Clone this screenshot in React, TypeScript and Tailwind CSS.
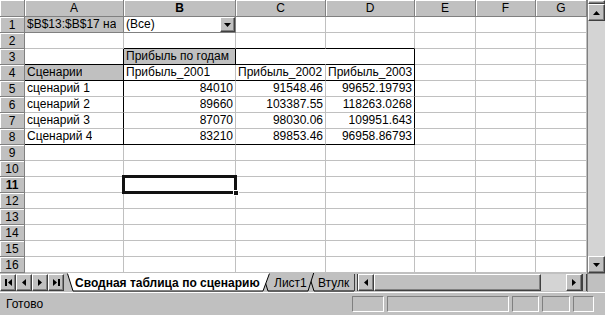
import React from "react";

type B = "g" | "k" | "h" | "n";
const RC: Record<B, string> = {
  g: "border-r-[#c0c0c0]",
  k: "border-r-black",
  h: "border-r-[#808080]",
  n: "border-r-white",
};
const BC: Record<B, string> = {
  g: "border-b-[#c0c0c0]",
  k: "border-b-black",
  h: "border-b-[#808080]",
  n: "border-b-white",
};

type CellDef = {
  t?: string;
  r?: B;
  b?: B;
  gray?: boolean;
  right?: boolean;
  sel?: boolean;
  dd?: boolean;
};

const raised =
  "border border-t-white border-l-white border-r-[#404040] border-b-[#404040] shadow-[inset_-1px_-1px_0_#808080] bg-[#c0c0c0]";

function Tri({ dir }: { dir: "up" | "down" | "left" | "right" }) {
  const pts: Record<string, string> = {
    up: "0,4 7,4 3.5,0",
    down: "0,0 7,0 3.5,4",
    left: "4,0 4,7 0,3.5",
    right: "0,0 0,7 4,3.5",
  };
  const wh = dir === "up" || dir === "down" ? { w: 7, h: 4 } : { w: 4, h: 7 };
  return (
    <svg width={wh.w} height={wh.h} viewBox={`0 0 ${wh.w} ${wh.h}`}>
      <polygon points={pts[dir]} fill="#000" />
    </svg>
  );
}

function Cell({ c }: { c: CellDef }) {
  const r = c.r ?? "g";
  const b = c.b ?? "g";
  return (
    <div
      className={`relative box-border border-r border-b ${RC[r]} ${BC[b]} ${
        c.gray ? "bg-[#c0c0c0]" : "bg-white"
      } flex items-center ${c.right ? "justify-end pr-[2px]" : "pl-[2px]"} ${
        c.sel ? "z-10" : ""
      } whitespace-nowrap text-[12px] leading-[15px] text-black`}
    >
      <span className="overflow-hidden leading-[15px]">{c.t ?? ""}</span>
      {c.dd && (
        <div className={`absolute right-0 top-0 bottom-0 w-[15px] flex items-center justify-center ${raised}`}>
          <Tri dir="down" />
        </div>
      )}
      {c.sel && (
        <>
          <div className="absolute left-[-2px] top-[-2px] right-[-2px] bottom-[-2px] border-[3px] border-[#111] pointer-events-none" />
          <div className="absolute right-[-4px] bottom-[-4px] w-[6px] h-[6px] bg-[#111] border border-white" />
        </>
      )}
    </div>
  );
}

const letters = ["A", "B", "C", "D", "E", "F", "G"];

function buildRows(): CellDef[][] {
  const rows: CellDef[][] = [];
  for (let i = 1; i <= 16; i++) {
    const row: CellDef[] = letters.map(() => ({}));
    rows.push(row);
  }
  rows[0][0] = { t: "$B$13:$B$17 на", gray: true, r: "h", b: "h" };
  rows[0][1] = { t: "(Все)", r: "h", b: "h", dd: true };
  rows[1][1] = { b: "k" };
  rows[1][2] = { b: "k" };
  rows[1][3] = { b: "k" };
  rows[2][0] = { r: "k", b: "k" };
  rows[2][1] = { t: "Прибыль по годам", gray: true, r: "k", b: "k" };
  rows[2][2] = { r: "n", b: "k" };
  rows[2][3] = { r: "k", b: "k" };
  rows[3][0] = { t: "Сценарии", gray: true, r: "k", b: "k" };
  rows[3][1] = { t: "Прибыль_2001", r: "g", b: "k" };
  rows[3][2] = { t: "Прибыль_2002", r: "g", b: "k" };
  rows[3][3] = { t: "Прибыль_2003", r: "k", b: "k" };
  const data = [
    ["сценарий 1", "84010", "91548.46", "99652.19793"],
    ["сценарий 2", "89660", "103387.55", "118263.0268"],
    ["сценарий 3", "87070", "98030.06", "109951.643"],
    ["Сценарий 4", "83210", "89853.46", "96958.86793"],
  ];
  data.forEach((d, i) => {
    const last = i === 3;
    const bb: B = last ? "k" : "g";
    rows[4 + i][0] = { t: d[0], r: "k", b: bb };
    rows[4 + i][1] = { t: d[1], right: true, r: "g", b: bb };
    rows[4 + i][2] = { t: d[2], right: true, r: "g", b: bb };
    rows[4 + i][3] = { t: d[3], right: true, r: "k", b: bb };
  });
  rows[10][1] = { sel: true };
  return rows;
}

function ColHeader({ l }: { l: string }) {
  return (
    <div
      className={`box-border bg-[#c0c0c0] border-r border-b border-r-[#808080] border-b-[#808080] shadow-[inset_1px_1px_0_#fff] flex items-center justify-center text-[12px] leading-none text-black ${
        l === "B" ? "font-bold" : ""
      }`}
    >
      {l}
    </div>
  );
}

function RowHeader({ n }: { n: number }) {
  return (
    <div
      className={`box-border bg-[#c0c0c0] border-r border-b border-r-[#808080] border-b-[#808080] shadow-[inset_1px_1px_0_#fff] flex items-center justify-center text-[12px] leading-none text-black ${
        n === 11 ? "font-bold" : ""
      }`}
    >
      {n}
    </div>
  );
}

function Sheet() {
  const rows = buildRows();
  return (
    <div className="grid grid-cols-[25px_99px_112px_90px_89px_61px_60px_51px] grid-rows-[17px_repeat(16,16px)] w-[587px] h-[273px]">
      <div className="box-border bg-[#c0c0c0] border-r border-b border-r-[#808080] border-b-[#808080] shadow-[inset_1px_1px_0_#fff]" />
      {letters.map((l) => (
        <ColHeader key={l} l={l} />
      ))}
      {rows.map((row, i) => (
        <React.Fragment key={i}>
          <RowHeader n={i + 1} />
          {row.map((c, j) => (
            <Cell key={j} c={c} />
          ))}
        </React.Fragment>
      ))}
    </div>
  );
}

function VScroll() {
  return (
    <div className="w-[18px] h-[273px] flex flex-col bg-[#c0c0c0] box-border border-l border-l-[#808080]">
      <div className={`h-[4px] box-border ${raised}`} />
      <div className={`h-[17px] box-border flex items-center justify-center ${raised}`}>
        <Tri dir="up" />
      </div>
      <div className="flex-1 bg-[#d4d4d4]" />
      <div className={`h-[17px] box-border flex items-center justify-center ${raised}`}>
        <Tri dir="down" />
      </div>
    </div>
  );
}

function NavBtn({ kind }: { kind: "first" | "prev" | "next" | "last" }) {
  return (
    <div className={`w-[16px] h-[17px] box-border flex items-center justify-center gap-[1px] ${raised}`}>
      {kind === "first" && <div className="w-[2px] h-[7px] bg-black" />}
      {(kind === "first" || kind === "prev") && <Tri dir="left" />}
      {(kind === "next" || kind === "last") && <Tri dir="right" />}
      {kind === "last" && <div className="w-[2px] h-[7px] bg-black" />}
    </div>
  );
}

function Tabs() {
  return (
    <div className="relative w-[288px] h-[19px] overflow-hidden">
      <svg className="absolute inset-0" width="288" height="19" viewBox="0 0 288 19">
        <polygon points="242,-1 248,18 300,18 306,-1" fill="#c0c0c0" stroke="#000" strokeWidth="1" />
        <polygon points="196,-1 202,18 242,18 248,-1" fill="#c0c0c0" stroke="#000" strokeWidth="1" />
        <polygon points="1,-1 7,18 197,18 204,-1" fill="#fff" stroke="#000" strokeWidth="1" />
        <line x1="1" y1="0" x2="204" y2="0" stroke="#fff" strokeWidth="1" />
      </svg>
      <span className="absolute left-[9px] top-[3px] text-[12px] leading-[14px] font-bold text-black whitespace-nowrap">
        Сводная таблица по сценарию
      </span>
      <span className="absolute left-[208px] top-[3px] text-[12px] leading-[14px] text-black whitespace-nowrap">
        Лист1
      </span>
      <span className="absolute left-[252px] top-[3px] text-[12px] leading-[14px] text-black whitespace-nowrap">
        Втулк
      </span>
    </div>
  );
}

function HScroll() {
  return (
    <div className="flex items-start h-[19px] pt-[1px]">
      <div className="w-[4px] h-[17px] box-border border-l border-r border-l-[#404040] border-r-[#404040] bg-[#c0c0c0]" />
      <div className={`w-[16px] h-[17px] box-border flex items-center justify-center ${raised}`}>
        <Tri dir="left" />
      </div>
      <div className={`w-[167px] h-[17px] box-border ${raised}`} />
      <div className="w-[25px] h-[17px] bg-[#d4d4d4]" />
      <div className={`w-[16px] h-[17px] box-border flex items-center justify-center ${raised}`}>
        <Tri dir="right" />
      </div>
      <div className="w-[5px] h-[17px] box-border border-l border-r border-l-[#404040] border-r-[#404040] bg-[#c0c0c0]" />
    </div>
  );
}

export default function App() {
  return (
    <div
      className="w-[605px] h-[315px] bg-[#c0c0c0] flex flex-col overflow-hidden"
      style={{ fontFamily: '"Liberation Sans", Arial, sans-serif' }}
    >
      <div className="flex h-[273px]">
        <Sheet />
        <VScroll />
      </div>
      <div className="flex h-[19px] items-start bg-[#c0c0c0]">
        <div className="flex pt-[1px]">
          <NavBtn kind="first" />
          <NavBtn kind="prev" />
          <NavBtn kind="next" />
          <NavBtn kind="last" />
        </div>
        <div className="ml-[2px]">
          <Tabs />
        </div>
        <HScroll />
        <div className="w-[18px] h-[19px] box-border border-t border-l border-t-[#808080] border-l-[#808080] bg-[#c0c0c0]" />
      </div>
      <div className="flex-1 box-border border-t border-t-white flex items-center pr-[5px]">
        <span className="pl-[6px] text-[12px] leading-none text-black w-[352px]">Готово</span>
        <div className="flex gap-[3px] items-center">
          <div className="w-[32px] h-[16px] box-border border border-t-[#808080] border-l-[#808080] border-r-white border-b-white" />
          <div className="w-[122px] h-[16px] box-border border border-t-[#808080] border-l-[#808080] border-r-white border-b-white" />
          <div className="w-[27px] h-[16px] box-border border border-t-[#808080] border-l-[#808080] border-r-white border-b-white" />
          <div className="w-[28px] h-[16px] box-border border border-t-[#808080] border-l-[#808080] border-r-white border-b-white" />
          <div className="w-[21px] h-[16px] box-border border border-t-[#808080] border-l-[#808080] border-r-white border-b-white" />
        </div>
      </div>
    </div>
  );
}
